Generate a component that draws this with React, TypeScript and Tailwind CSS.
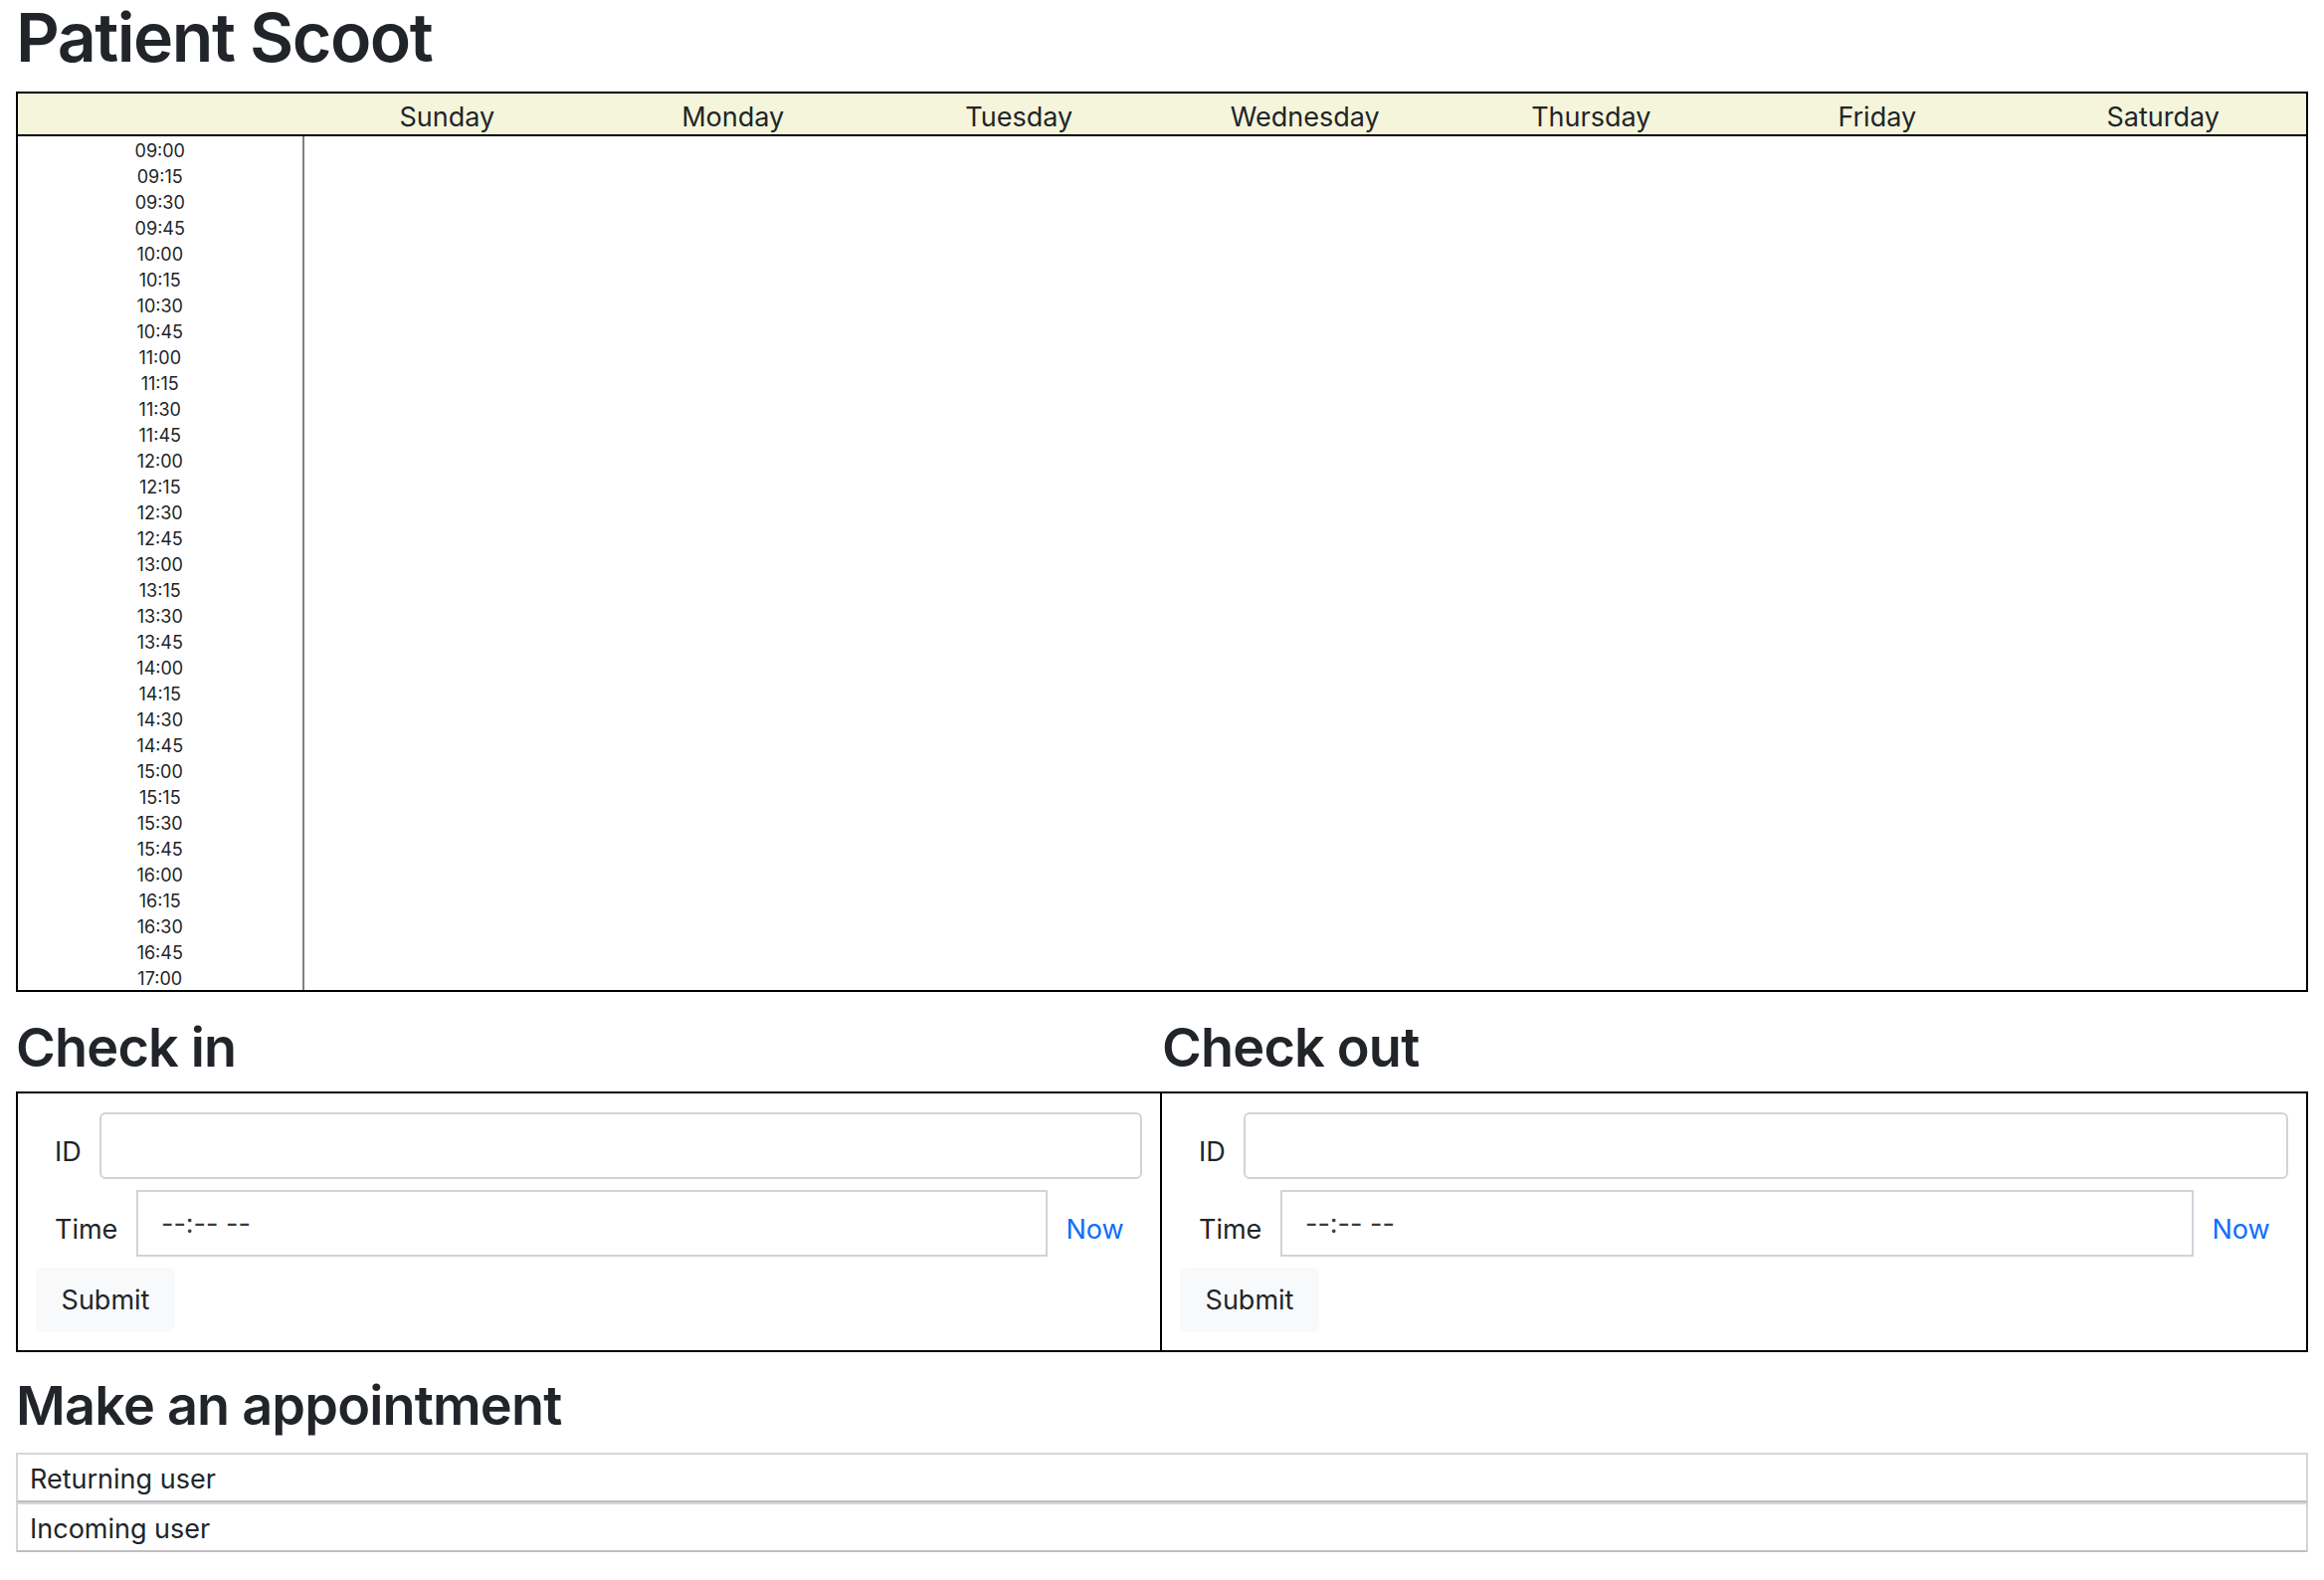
import React from "react";

const DAYS = ["Sunday", "Monday", "Tuesday", "Wednesday", "Thursday", "Friday", "Saturday"];

const TIMES: string[] = (() => {
  const out: string[] = [];
  for (let m = 9 * 60; m <= 17 * 60; m += 15) {
    const h = Math.floor(m / 60);
    const mm = m % 60;
    out.push(`${h.toString().padStart(2, "0")}:${mm.toString().padStart(2, "0")}`);
  }
  return out;
})();

function CheckBox({ title, noLeft }: { title: string; noLeft?: boolean }) {
  return (
    <div>
      <h2 className="text-[54px] leading-[54px] font-semibold tracking-[-0.8px] mb-[17px]">{title}</h2>
      <div
        className={
          noLeft
            ? "border-2 border-l-0 border-black pt-[19px] px-[18px] pb-[18px]"
            : "border-2 border-black pt-[19px] px-[18px] pb-[18px]"
        }
      >
        <div className="flex items-center">
          <label className="w-[64px] shrink-0 pl-[19px] pt-[12px] text-[27px] leading-[27px]">ID</label>
          <input
            type="text"
            className="flex-1 min-w-0 h-[67px] border-2 border-[#ced4da] rounded-[6px] bg-white px-[20px] text-[27px] outline-none"
          />
        </div>
        <div className="flex items-center mt-[11px]">
          <label className="w-[101px] shrink-0 pl-[19px] pt-[12px] text-[27px] leading-[27px]">Time</label>
          <input
            type="text"
            readOnly
            placeholder="--:-- --"
            className="flex-1 min-w-0 h-[67px] border-2 border-[#ced4da] bg-white pl-[23px] text-[27px] outline-none placeholder:text-[#3b3b3b]"
          />
          <button className="w-[95px] shrink-0 pt-[12px] text-[27px] leading-[27px] text-[#0d6efd] text-center">
            Now
          </button>
        </div>
        <button className="mt-[11px] h-[65px] w-[140px] rounded-[8px] bg-[#f8f9fa] pt-[2px] text-[27px] text-[#212529] flex items-center justify-center">
          Submit
        </button>
      </div>
    </div>
  );
}

export default function App() {
  return (
    <div className="min-h-screen bg-white px-[16px] text-[#212529] font-['Inter','Noto_Sans',sans-serif]">
      <h1 className="text-[68px] leading-[68px] font-semibold tracking-[-1.5px] pt-[3px] mb-[21px]">Patient Scoot</h1>

      <div className="border-2 border-black">
        <div className="grid grid-cols-8 h-[43px] bg-[#f5f5dc] border-b-2 border-black items-center pt-[6px] text-[27px] leading-[27px]">
          <div />
          {DAYS.map((d) => (
            <div key={d} className="text-center">
              {d}
            </div>
          ))}
        </div>
        <div className="grid grid-cols-8">
          <div className="border-r-2 border-[#808080]">
            {TIMES.map((t) => (
              <div key={t} className="h-[26px] flex items-center justify-center pt-[4px] text-[18px] leading-[18px]">
                {t}
              </div>
            ))}
          </div>
          <div className="col-span-7" />
        </div>
      </div>

      <div className="grid grid-cols-2 mt-[29px]">
        <CheckBox title="Check in" />
        <CheckBox title="Check out" noLeft />
      </div>

      <h2 className="text-[54px] leading-[54px] font-semibold tracking-[-0.8px] mt-[27px] mb-[20px]">Make an appointment</h2>
      <div>
        <div className="h-[50px] border-2 border-[#d6d6d6] border-b-[#bfbfbf] pl-[12px] pt-[4px] text-[27px] leading-[42px]">
          Returning user
        </div>
        <div className="h-[50px] border-2 border-[#d6d6d6] border-b-[#bfbfbf] pl-[12px] pt-[4px] text-[27px] leading-[42px]">
          Incoming user
        </div>
      </div>
    </div>
  );
}
